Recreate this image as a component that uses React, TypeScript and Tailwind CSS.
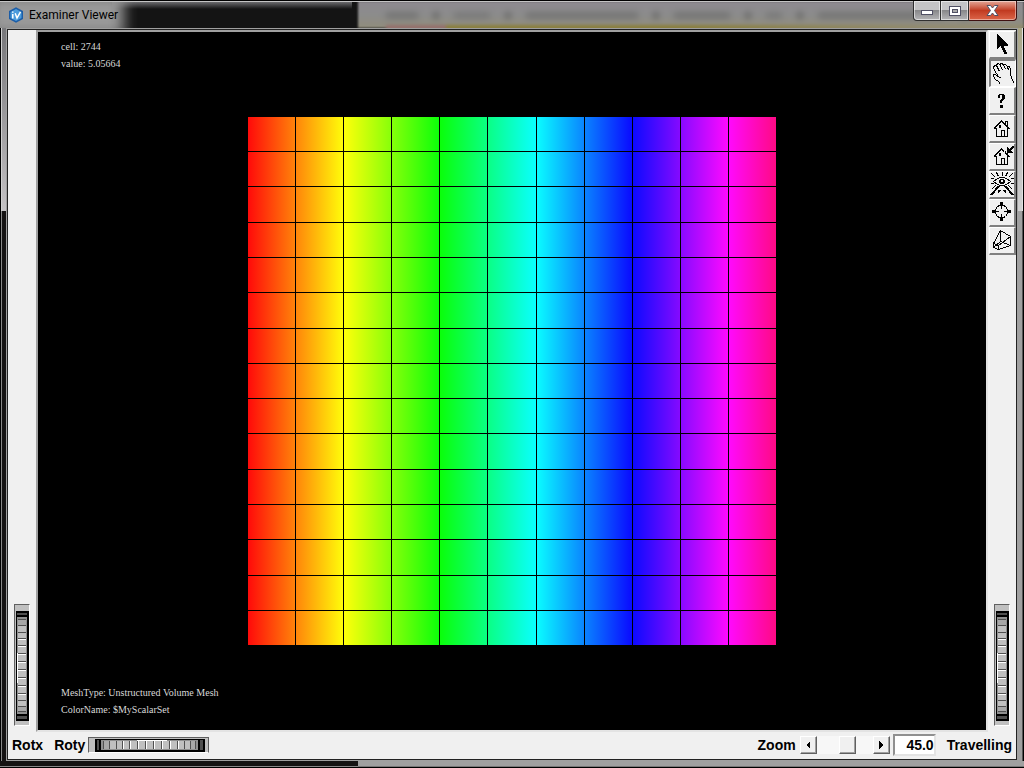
import type { ReactNode } from "react";

const columnLines = [47, 95, 143, 191, 239, 288, 336, 384, 432, 480];
const rowLines = [34, 69, 105, 140, 175, 211, 246, 281, 316, 352, 387, 422, 458, 493];
const rainbow = [
  "#ff0a0a", "#ff850a", "#ffff0a", "#85ff0a", "#0aff0a", "#0aff85",
  "#0affff", "#0a85ff", "#0a0aff", "#850aff", "#ff0aff", "#ff0a85",
];

function Mesh() {
  return (
    <svg viewBox="0 0 528 528" className="h-full max-w-full" shapeRendering="crispEdges" role="img" aria-label="Mesh">
      <defs>
        <linearGradient id="scalar">
          {rainbow.map((color, i) => (
            <stop key={color} offset={i / 11} stopColor={color} />
          ))}
        </linearGradient>
      </defs>
      <rect width="528" height="528" fill="url(#scalar)" />
      {columnLines.map((x) => (
        <rect key={x} x={x} y="0" width="1" height="528" fill="#000" />
      ))}
      {rowLines.map((y) => (
        <rect key={y} x="0" y={y} width="528" height="1" fill="#000" />
      ))}
    </svg>
  );
}

const ridges = [8, 14, 21, 27, 34, 42, 50, 58, 66, 74, 82, 89, 95, 100];

function WheelDrawing({ vertical }: { vertical: boolean }) {
  const bars = (
    <>
      <rect x="0" y="0" width="13" height="110" fill="#000" />
      <rect x="1" y="2" width="10" height="106" fill="#505050" />
      <rect x="1" y="6" width="10" height="98" fill="#909090" />
      <rect x="2" y="9" width="8" height="91" fill="#a8a8a8" />
      <rect x="2" y="15" width="8" height="80" fill="#c0c0c0" />
      <rect x="1" y="42" width="1" height="30" fill="#fff" />
      {ridges.map((y) => (
        <g key={y}>
          <rect x="2" y={y} width="8" height="1" fill="#505050" />
          {y > 24 && y < 85 && <rect x="2" y={y + 1} width="8" height="1" fill="#fff" />}
        </g>
      ))}
      <rect x="1" y="4" width="10" height="2" fill="#000" />
      <rect x="1" y="103" width="10" height="2" fill="#000" />
    </>
  );
  return vertical ? (
    <svg width="13" height="110" shapeRendering="crispEdges" aria-hidden="true">{bars}</svg>
  ) : (
    <svg width="110" height="13" shapeRendering="crispEdges" aria-hidden="true">
      <g transform="matrix(0 1 1 0 0 0)">{bars}</g>
    </svg>
  );
}

function Wheel({ id, name, vertical = false }: { id: string; name: string; vertical?: boolean }) {
  return (
    <div
      className={
        "relative flex shrink-0 items-center border border-t-[#606060] border-l-[#606060] bg-[#c0c0c0] " +
        (vertical ? "h-[122px] w-4 justify-end border-r-white border-b-white pt-0.5" : "h-4 w-[121px] justify-center border-r-[#606060] border-b-white pl-0.5")
      }
    >
      <WheelDrawing vertical={vertical} />
      <input id={id} type="range" aria-label={name} className="absolute inset-0 h-full w-full opacity-0" />
    </div>
  );
}

function Ink({ children }: { children: ReactNode }) {
  return (
    <svg width="24" height="24" viewBox="0 0 24 24" fill="none" stroke="#000" shapeRendering="crispEdges" aria-hidden="true">
      {children}
    </svg>
  );
}

function House() {
  return (
    <>
      <path d="M3.5 12.5L11.5 4.5L19.5 12.5M3.5 12.5H6.5M16.5 12.5H19.5M6.5 12.5V20.5H17.5V11.5M11.5 20.5V14.5H14.5V20.5M15.5 8.5V5.5H17.5V10.5" />
      <path d="M4.5 12.5L11.5 5.5L18.5 12.5" />
      <path d="M9 9H11V12H9Z" fill="#000" stroke="none" />
    </>
  );
}

const tools: { name: string; icon: ReactNode }[] = [
  {
    name: "Pick",
    icon: <path d="M7 2H8V3H9V4H10V5H11V6H12V7H13V8H14V9H15V10H16V11H17V12H18V14H14V16H15V18H16V20H17V22H14V20H13V18H12V16H11V14H10V15H9V16H8V17H7Z" fill="#000" stroke="none" />,
  },
  {
    name: "View",
    icon: (
      <path d="M9.5 23.5L7.5 20.5L4.5 18.5L2.5 15.5V13.5H4.5L6.5 15.5H7.5L5.5 12.5L3.5 9.5L2.5 6.5L3.5 4.5H5.5L8.5 10.5M5.5 5.5V3.5L7.5 2.5L9.5 4.5L11.5 9.5M8.5 3.5L10.5 2.5L12.5 3.5L14.5 8.5M12.5 3.5H14.5L16.5 5.5L17.5 9.5M16.5 5.5L18.5 5.5L19.5 8.5V12.5L20.5 17.5L23.5 22.5M7.5 15.5L10.5 17.5" />
    ),
  },
  {
    name: "Help",
    icon: <path d="M9 6H14V7H15V11H14V12H13V13H12V15H10V12H11V11H12V7H10V10H8V7H9ZM10 17H13V20H10Z" fill="#000" stroke="none" />,
  },
  { name: "Home", icon: <House /> },
  {
    name: "Set home",
    icon: (
      <>
        <House />
        <path d="M14 4H24V9H14Z" fill="#f0f0f0" stroke="none" />
        <path d="M15.5 9V6.5" />
        <path d="M22 2H24V4H23V5H22V6H21V7H22V8H23V9H17V3H18V4H19V5H20V4H21V3H22Z" fill="#000" stroke="none" />
      </>
    ),
  },
  {
    name: "View all",
    icon: (
      <>
        <path d="M3.5 9.5L7.5 6.5L10.5 5.5H13.5L16.5 6.5L20.5 9.5L16.5 12.5L13.5 13.5H10.5L7.5 12.5Z" />
        <path d="M10 7H14V8H15V11H14V12H10V11H9V8H10Z" fill="#000" stroke="none" />
        <path d="M11 8H13V10H11Z" fill="#f0f0f0" stroke="none" />
        <path d="M1.5 1.5L5.5 5.5M6.5 0.5L8.5 4.5M12 0V4M17.5 0.5L15.5 4.5M22.5 1.5L18.5 5.5M0.5 6.5H3.5M23.5 6.5H20.5M0.5 11.5H3.5M23.5 11.5H20.5M5.5 13.5L1.5 17.5M18.5 13.5L22.5 17.5" />
        <path d="M9 14L1 23M15 14L23 23" strokeWidth="2" />
        <path d="M8 18H11V19H10V20H9V21H8ZM13 18H16V21H15V20H14V19H13Z" fill="#000" stroke="none" />
      </>
    ),
  },
  {
    name: "Seek",
    icon: (
      <>
        <path d="M9.5 5.5H13.5L15.5 6.5L17.5 9.5V13.5L15.5 16.5L13.5 17.5H9.5L7.5 16.5L5.5 13.5V9.5L7.5 6.5ZM11.5 2V9M11.5 14V21M2 11.5H9M14 11.5H21" />
        <path d="M10 2H13V6H12V7H11V6H10ZM10 21H13V17H12V16H11V17H10ZM2 10V13H6V12H7V11H6V10ZM21 10V13H17V12H16V11H17V10Z" fill="#000" stroke="none" />
      </>
    ),
  },
  {
    name: "Projection",
    icon: (
      <path d="M3.5 15.5L8.5 17.5V21.5L3.5 19.5ZM3.5 15.5L10.5 2.5L20.5 8.5V17.5L8.5 21.5M10.5 2.5V13.5L20.5 17.5M8.5 17.5L20.5 8.5M3.5 19.5L10.5 13.5" />
    ),
  },
];

function ToolBar() {
  return (
    <div className="flex flex-col" role="toolbar" aria-label="Viewer tools">
      {tools.map(({ name, icon }) => (
        <button
          key={name}
          aria-label={name}
          className={
            "flex h-7 w-[27px] items-start border bg-[#f0f0f0] " +
            (name === "View"
              ? "border-t-2 border-l-2 border-t-[#808080] border-l-[#808080] border-r-white border-b-white"
              : "border-r-2 border-b-2 border-t-white border-l-white border-r-[#808080] border-b-[#808080]")
          }
        >
          <Ink>{icon}</Ink>
        </button>
      ))}
    </div>
  );
}

function ScrollArrow({ name, left = false }: { name: string; left?: boolean }) {
  return (
    <button
      aria-label={name}
      className="flex h-[18px] w-[17px] items-center justify-center border border-t-white border-l-white border-r-[#606060] border-b-[#606060] bg-[#f0f0f0] shadow-[inset_-1px_-1px_0_#a0a0a0]"
    >
      <svg width="5" height="8" viewBox="0 0 5 8" shapeRendering="crispEdges" aria-hidden="true">
        <path d={left ? "M4 0V8L0 4Z" : "M0 0V8L4 4Z"} />
      </svg>
    </button>
  );
}

const captionButton =
  "flex h-5 items-center justify-center border border-t-0 border-[#303030] bg-linear-to-b from-[#c4c4c6] from-45% via-[#88888a] via-50% to-[#b5b5b7] shadow-[inset_0_0_0_1px_#ffffff90]";

function TitleBar() {
  return (
    <header className="relative flex h-7 items-start overflow-hidden border-t border-black bg-[#141414]">
      <div className="absolute top-0 right-0 bottom-0 left-[358px] bg-linear-to-b from-[#8e8a90] via-[#8c8c8c] to-[#918d7c] blur-[1px]" aria-hidden="true">
        <div className="flex gap-4 pt-3 pl-7 blur-[3px]">
          <i className="h-[5px] w-8 bg-[#6c6c6c]" />
          <i className="h-[5px] w-1 bg-[#444]" />
          <i className="h-[5px] w-9 bg-[#747474]" />
          <i className="h-[5px] w-1 bg-[#444]" />
          <i className="h-[5px] w-28 bg-[#6c6c6c]" />
          <i className="h-[5px] w-1 bg-[#444]" />
          <i className="h-[5px] w-14 bg-[#6c6c6c]" />
          <i className="h-[5px] w-1 bg-[#444]" />
          <i className="h-[5px] w-4 bg-[#747474]" />
          <i className="h-[5px] w-1 bg-[#444]" />
          <i className="h-[5px] w-32 bg-[#6c6c6c]" />
          <i className="h-[5px] w-1 bg-[#444]" />
        </div>
        <div className="mt-[7px] ml-7 flex h-2 blur-[1px]">
          <i className="w-15 bg-[#94706c]" />
          <i className="w-60 bg-[#8a7f3e]" />
          <i className="w-60 bg-linear-to-r from-[#8a7f3e] to-[#918b70]" />
          <i className="flex-1 bg-[#918b70]" />
        </div>
      </div>
      <div className="absolute top-0 left-28 h-2 w-60 bg-linear-to-b from-[#77777a] to-transparent" />
      <div className="absolute -top-2 -left-3 h-11 w-[136px] bg-[#999] blur-[7px]" />
      <div className="absolute inset-x-0 top-0 h-px bg-[#c4c4c4]" />
      <div className="relative flex h-7 flex-1 items-center gap-[5px] pl-2">
        <svg width="16" height="16" viewBox="0 0 16 16" aria-hidden="true">
          <path d="M8 .3L15 4v8L8 15.7L1 12V4Z" fill="#1c5da7" />
          <path d="M8 2L13.5 5v6L8 14L2.5 11V5Z" fill="#4b9bdc" />
          <path d="M4.8 7V11.5M4.8 4.5V5.8M7.2 6.2L9 11L12.5 4.8" fill="none" stroke="#fff" strokeWidth="1.5" />
        </svg>
        <h1 className="font-[Roboto,sans-serif] text-xs text-black">Examiner Viewer</h1>
      </div>
      <div className="relative flex pr-[7px]">
        <button aria-label="Minimize" className={captionButton + " w-7 rounded-bl"}>
          <svg width="12" height="5" className="mt-1" aria-hidden="true"><rect x=".5" y=".5" width="11" height="4" fill="#fff" stroke="#505064" /></svg>
        </button>
        <button aria-label="Maximize" className={captionButton + " w-7 border-l-0"}>
          <svg width="12" height="10" aria-hidden="true">
            <rect x=".5" y=".5" width="11" height="9" fill="#fff" stroke="#505064" />
            <rect x="3.5" y="3.5" width="5" height="3" fill="#aaa" stroke="#505064" />
          </svg>
        </button>
        <button
          aria-label="Close"
          className="flex h-5 w-12 items-center justify-center rounded-br border border-t-0 border-l-0 border-[#401010] bg-linear-to-b from-[#e3a596] from-0% via-[#c13a20] via-50% to-[#dc6548] shadow-[inset_0_0_0_1px_#ffffff70]"
        >
          <svg width="13" height="11" viewBox="0 0 13 11" aria-hidden="true">
            <path d="M1 .5H4.5L6.5 3L8.5 .5H12L8.5 5.5L12 10.5H8.5L6.5 8L4.5 10.5H1L4.5 5.5Z" fill="#fff" stroke="#505064" />
          </svg>
        </button>
      </div>
    </header>
  );
}

export default function App() {
  return (
    <div className="flex h-screen flex-col overflow-hidden bg-black font-['Liberation_Sans',sans-serif] text-sm text-black">
      <TitleBar />
      <div className="flex min-h-0 flex-1">
        <div className="flex w-[6px] shrink-0 flex-col border-l border-black">
          <div className="h-[183px] border-l border-[#d0d0d0] bg-linear-to-b from-[#77777a] to-[#c4c2c4]" />
          <div className="flex-1 border-l border-[#888] bg-[#151313]" />
        </div>
        <div className="flex min-w-0 flex-1 flex-col border border-[#a0a0a0]">
          <div className="flex min-h-0 flex-1 flex-col border border-[#222] bg-[#f0f0f0]">
            <div className="flex min-h-0 flex-1">
              <div className="flex w-7 shrink-0 flex-col items-center justify-end pb-[6px]">
                <Wheel id="rotx" name="Rotx" vertical />
              </div>
              <main className="flex min-w-0 flex-1 flex-col border-2 border-t-[#a0a0a0] border-l-[#a0a0a0] border-r-[#e3e3e3] border-b-[#e3e3e3] bg-black font-['Liberation_Serif',serif] text-[10px] leading-[17px] text-[#d8d8d8]">
                <div className="px-[23px] pt-[6px]">
                  <p>cell: 2744</p>
                  <p>value: 5.05664</p>
                </div>
                <div className="flex min-h-0 flex-1 justify-center pt-[45px] pb-[39px]">
                  <Mesh />
                </div>
                <div className="px-[23px] pb-3">
                  <p>MeshType: Unstructured Volume Mesh</p>
                  <p>ColorName: $MyScalarSet</p>
                </div>
              </main>
              <div className="flex w-7 shrink-0 flex-col items-center justify-between pt-px pb-[6px]">
                <ToolBar />
                <Wheel id="dolly" name="Travelling" vertical />
              </div>
            </div>
            <footer className="flex h-[27px] shrink-0 items-center justify-between px-1 pb-px leading-4 font-bold">
              <div className="flex items-center">
                <label htmlFor="rotx" className="mr-[11px]">Rotx</label>
                <label htmlFor="roty" className="mr-[3px]">Roty</label>
                <Wheel id="roty" name="Roty" />
              </div>
              <div className="flex items-center">
                <label htmlFor="zoom" className="mr-1">Zoom</label>
                <div className="flex items-center bg-[#f7f7f7]">
                  <ScrollArrow name="Zoom out" left />
                  <div className="relative flex h-[18px] w-14 pl-[22px]">
                    <div className="h-[18px] w-[17px] border border-t-white border-l-white border-r-[#606060] border-b-[#606060] bg-[#f0f0f0] shadow-[inset_-1px_-1px_0_#a0a0a0]" />
                    <input type="range" aria-label="Zoom" className="absolute inset-0 h-full w-full opacity-0" />
                  </div>
                  <ScrollArrow name="Zoom in" />
                </div>
                <input
                  id="zoom"
                  defaultValue="45.0"
                  className="mr-[11px] ml-[3px] h-[22px] w-[43px] border-2 border-t-[#909090] border-l-[#909090] border-r-[#e3e3e3] border-b-[#e3e3e3] bg-white text-right"
                />
                <label htmlFor="dolly">Travelling</label>
              </div>
            </footer>
          </div>
        </div>
        <div className="flex w-[6px] shrink-0 flex-col border-r border-black">
          <div className="h-[183px] border-r border-[#e0e0e0] bg-linear-to-b from-[#aaa684] via-[#b5b5b5] to-[#d0d0d0]" />
          <div className="flex-1 border-r border-[#555] bg-[#a0a0a0]" />
        </div>
      </div>
      <div className="flex h-[7px] shrink-0 border-b border-black">
        <div className="w-[358px] border-b border-[#888] bg-[#151313]" />
        <div className="flex-1 border-b border-[#777] bg-[#a0a0a0]" />
      </div>
    </div>
  );
}
